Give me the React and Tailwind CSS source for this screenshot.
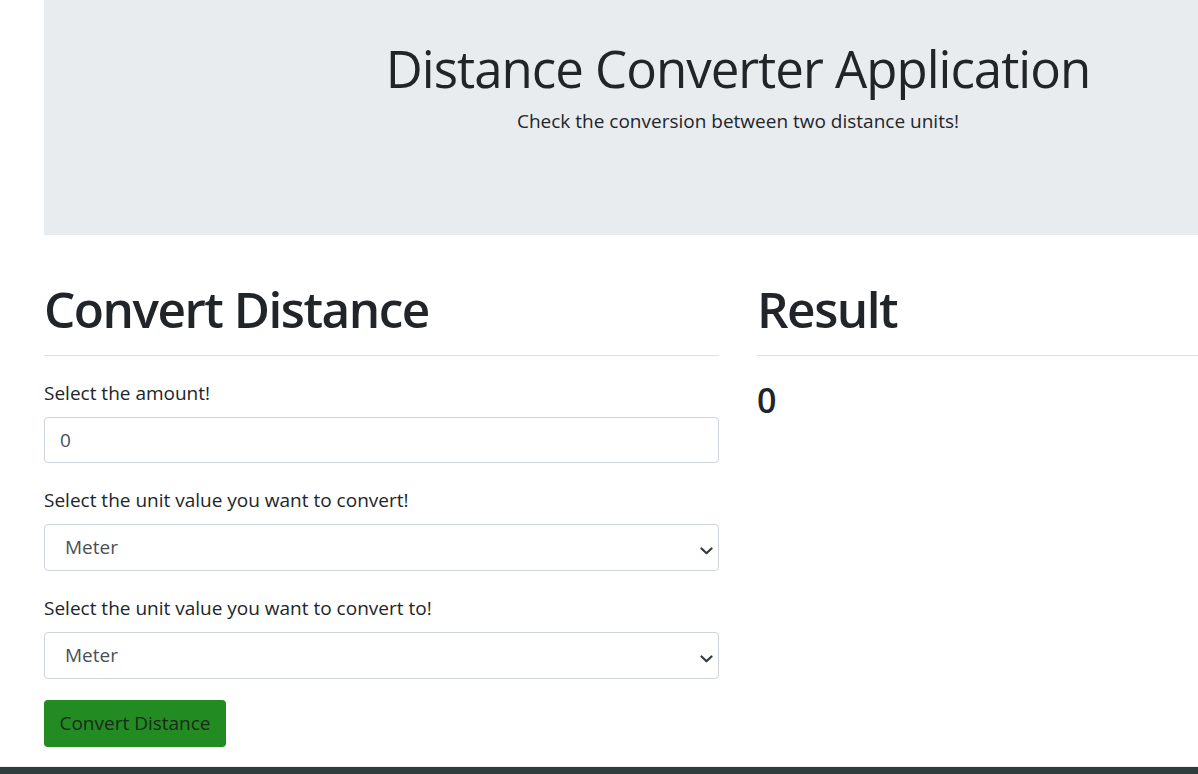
import React from "react";

function Select({ value }) {
  return (
    <div className="relative h-[47px] w-full rounded-[4px] border border-[#ced4da] bg-white">
      <div className="flex h-full items-center pl-[20px] text-[19px] text-[#495057]">{value}</div>
      <svg width="13" height="8" viewBox="0 0 13 8" className="absolute right-[5px] top-[22px]" aria-hidden="true">
        <path d="M1.5 1.5 L6.5 6.2 L11.5 1.5" fill="none" stroke="#343a40" strokeWidth="2.2" strokeLinecap="round" strokeLinejoin="round" />
      </svg>
    </div>
  );
}

export default function App() {
  return (
    <div className="h-[774px] w-full overflow-hidden bg-white font-['Open_Sans',sans-serif] text-[#212529]">
      <div className="flex h-[766px] w-[1476px] flex-col pl-[44px]">
        <div className="flex h-[235px] w-[1388px] flex-col items-center bg-[#e9ecef] pt-[33px]">
          <h1 className="text-[51px] leading-[70px] font-normal tracking-[-1px]">Distance Converter Application</h1>
          <p className="mt-[4px] text-[19px] leading-[28px]">Check the conversion between two distance units!</p>
        </div>
        <div className="mt-[43px] flex w-[1388px] gap-[38px]">
          <div className="flex w-[675px] flex-col">
            <h2 className="text-[49.5px] leading-[62px] font-semibold tracking-[-1.5px]">Convert Distance</h2>
            <div className="mt-[15px] h-px w-full bg-[#dee2e6]" />
            <div className="mt-[23px] text-[19px] leading-[29px]">Select the amount!</div>
            <div className="mt-[9px] flex h-[46px] w-full items-center rounded-[4px] border border-[#ced4da] bg-white pl-[15px] text-[19px] text-[#495057]">0</div>
            <div className="mt-[23px] text-[19px] leading-[29px]">Select the unit value you want to convert!</div>
            <div className="mt-[9px]">
              <Select value="Meter" />
            </div>
            <div className="mt-[23px] text-[19px] leading-[29px]">Select the unit value you want to convert to!</div>
            <div className="mt-[9px]">
              <Select value="Meter" />
            </div>
            <div className="mt-[21px]">
              <button className="h-[47px] w-[182px] rounded-[4px] bg-[#228b22] text-[19px] text-[#1b2a1b]">Convert Distance</button>
            </div>
          </div>
          <div className="flex w-[675px] flex-col">
            <h2 className="text-[49.5px] leading-[62px] font-semibold tracking-[-1.5px]">Result</h2>
            <div className="mt-[15px] h-px w-full bg-[#dee2e6]" />
            <div className="mt-[24px] text-[34px] leading-[40px] font-semibold">0</div>
          </div>
        </div>
      </div>
      <div className="h-px w-full bg-[#f0f0f0]" />
      <div className="h-[7px] w-full bg-[#2f3d3d]" />
    </div>
  );
}
